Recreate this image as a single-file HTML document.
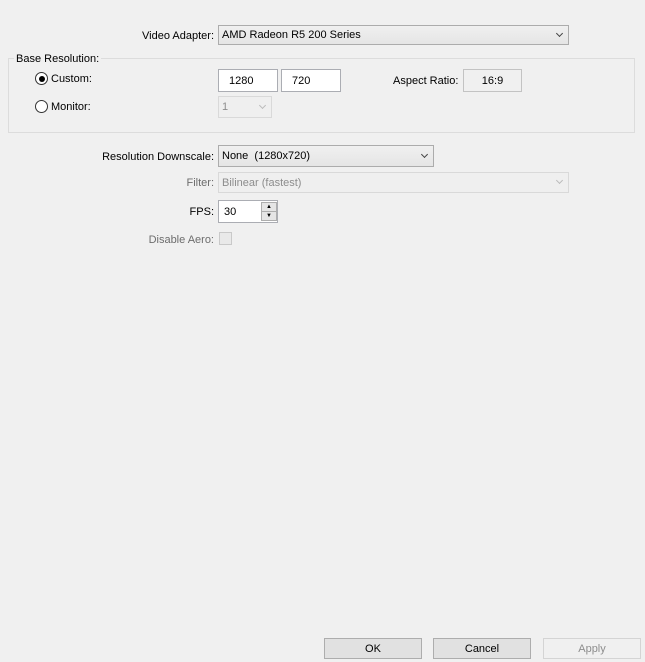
<!DOCTYPE html><html><head><style>
body{margin:0;width:645px;height:662px;background:#f0f0f0;font-family:"Liberation Sans",sans-serif;font-size:11px;color:#000;position:relative;overflow:hidden}
.a{position:absolute}
.lbl{position:absolute;text-align:right;line-height:14px}
.sel{position:absolute;box-sizing:border-box;border:1px solid #acacac;background:linear-gradient(#f0f0f0,#e5e5e5);line-height:19px;padding-left:3px}
.sel.dis{background:#efefef;border-color:#d9d9d9;color:#8d8d8d}
.chev{position:absolute;right:6px;top:5px;width:4px;height:4px;border-right:1.5px solid #444;border-bottom:1.5px solid #444;transform:rotate(45deg)}
.dis .chev{border-color:#bbb}
.inp{position:absolute;box-sizing:border-box;border:1px solid #abadb3;background:#fff;line-height:22px;padding-left:10px}
.rad{position:absolute;width:11px;height:11px;border:1px solid #333;border-radius:50%;background:#fff}
.btn{position:absolute;box-sizing:border-box;border:1px solid #adadad;background:#e1e1e1;text-align:center;line-height:21px;height:21px;width:98px}
</style></head><body>
<div class="lbl" style="right:431px;top:29px">Video Adapter:</div>
<div class="sel" style="left:218px;top:25px;width:351px;height:20px">AMD Radeon R5 200 Series<div class="chev"></div></div>

<div class="a" style="left:8px;top:58px;width:625px;height:73px;border:1px solid #dcdcdc"></div>
<div class="a" style="left:14px;top:52px;background:#f0f0f0;padding:0 2px;line-height:14px">Base Resolution:</div>

<div class="rad" style="left:35px;top:72px"><div class="a" style="left:2.5px;top:2.5px;width:6px;height:6px;border-radius:50%;background:#000"></div></div>
<div class="a" style="left:51px;top:72px;line-height:14px">Custom:</div>
<div class="inp" style="left:218px;top:69px;width:60px;height:23px">1280</div>
<div class="inp" style="left:281px;top:69px;width:60px;height:23px">720</div>
<div class="a" style="left:393px;top:74px;line-height:14px">Aspect Ratio:</div>
<div class="a" style="left:463px;top:69px;width:59px;height:23px;box-sizing:border-box;border:1px solid #c3c3c3;text-align:center;line-height:22px">16:9</div>

<div class="rad" style="left:35px;top:100px"></div>
<div class="a" style="left:51px;top:100px;line-height:14px">Monitor:</div>
<div class="sel dis" style="left:218px;top:96px;width:54px;height:22px;line-height:21px">1<div class="chev" style="top:6px"></div></div>

<div class="lbl" style="right:431px;top:150px">Resolution Downscale:</div>
<div class="sel" style="left:218px;top:145px;width:216px;height:22px;line-height:21px">None&nbsp; (1280x720)<div class="chev" style="top:6px"></div></div>
<div class="lbl" style="right:431px;top:176px;color:#6d6d6d">Filter:</div>
<div class="sel dis" style="left:218px;top:172px;width:351px;height:21px;line-height:20px">Bilinear (fastest)<div class="chev"></div></div>
<div class="lbl" style="right:431px;top:205px">FPS:</div>
<div class="inp" style="left:218px;top:200px;width:60px;height:23px;padding-left:5px">30</div>
<div class="a" style="left:261px;top:202px;width:14px;height:8px;border:1px solid #adadad;background:#e5e5e5;font-size:6px;line-height:8px;text-align:center">▲</div>
<div class="a" style="left:261px;top:211px;width:14px;height:8px;border:1px solid #adadad;background:#e5e5e5;font-size:6px;line-height:8px;text-align:center">▼</div>
<div class="lbl" style="right:431px;top:233px;color:#6d6d6d">Disable Aero:</div>
<div class="a" style="left:219px;top:232px;width:11px;height:11px;border:1px solid #c9c9c9;background:#e9e9e9"></div>

<div class="btn" style="left:324px;top:638px">OK</div>
<div class="btn" style="left:433px;top:638px">Cancel</div>
<div class="btn" style="left:543px;top:638px;background:#f0f0f0;border-color:#d4d4d4;color:#8d8d8d">Apply</div>
</body></html>
